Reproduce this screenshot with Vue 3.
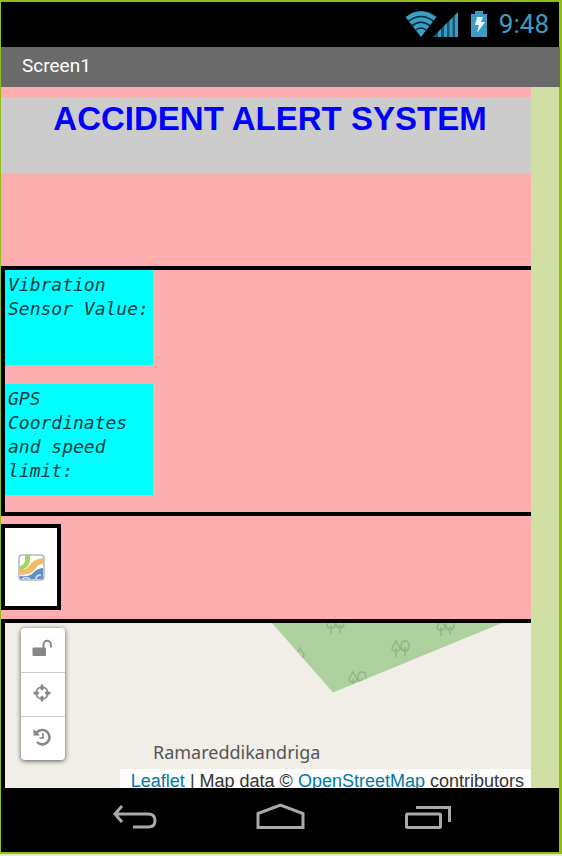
<script setup>
const conifer = 'M5 1L1 8q0 3 4 3t4-3zM5 8v9'
const broadleaf = 'M14 1q-4 0-4 5t4 5 4-5-4-5zM14 7v9M11.500 9l2.500 3 2.500-3'
const trees = [
  { x: 326, y: -6, shape: conifer + broadleaf },
  { x: 436, y: -4, shape: conifer + broadleaf },
  { x: 391, y: 17, shape: conifer + broadleaf },
  { x: 348, y: 48, shape: conifer + broadleaf },
  { x: 295, y: 24, shape: conifer },
]
const labels = [
  { text: 'Vibration Sensor Value:', size: 'short' },
  { text: 'GPS Coordinates and speed limit:', size: 'tall' },
]
</script>

<template>
  <div class="device">
    <header class="status">
      <svg class="signals" width="84" height="30" viewBox="0 0 84 30" aria-hidden="true">
        <path d="M1.500 8Q17 -4 32.500 8L17 28Z" fill="#3c9cc3" />
        <g fill="none" stroke="#0b2a36" stroke-width="1.600">
          <path d="M4 12.500Q17 2.500 30 12.500" />
          <path d="M7.500 17Q17 9.500 26.500 17" />
          <path d="M11 21.500Q17 16.500 23 21.500" />
        </g>
        <path d="M29 28L54 3V28Z" fill="#1c5870" />
        <path d="M34 28v-5l3-3v8zM40 28V17l3-3v14zM45.500 28V11.500l3-3V28zM51 28V6l3-3v25z" fill="#3c9cc3" />
        <path d="M67 5h4V2h8v3h4v23H67z" fill="#3c9cc3" />
        <path d="M73 8h6l-2 5h4l-8 11 2-8h-4z" fill="#e9f7fb" />
      </svg>
      <time class="clock">9:48</time>
    </header>
    <div class="titlebar">Screen1</div>

    <main class="body">
      <div class="screen">
        <h1 class="heading">ACCIDENT ALERT SYSTEM</h1>
        <section class="readings">
          <p v-for="l in labels" :key="l.text" :class="['label', l.size]">{{ l.text }}</p>
        </section>
        <button class="map-icon" type="button" aria-label="Map">
          <svg width="28" height="28" viewBox="0 0 28 28" aria-hidden="true">
            <rect x="2" y="2" width="25" height="25" rx="3" fill="#fff" />
            <path d="M8 2h5v5q0 6-6 9l-4 2v-5q5-2 5-6z" fill="#a2d45e" />
            <path d="M26 5v6q-5 0-7 4-3 5-8 6l-8 1v-5q6 0 9-4 4-7 14-8z" fill="#f4bd65" />
            <path d="M26 15v11H3v-3q8 1 12-2 5-6 11-6z" fill="#628fcb" />
            <path d="M5 26q4-3 8 0M19 26q0-4 5-4" fill="none" stroke="#dce8f6" stroke-width="1.500" />
            <rect x="2" y="2" width="25" height="25" rx="3" fill="none" stroke="#b4b7c0" stroke-width="1.500" />
          </svg>
        </button>
        <section class="map">
          <svg class="terrain" width="531" height="170" viewBox="5 0 531 170" aria-hidden="true">
            <defs>
              <clipPath id="wood"><path d="M272 0H502L333 69.500Z" /></clipPath>
            </defs>
            <path d="M274 0V170" stroke="#eceae4" />
            <path d="M272 0H502L333 69.500Z" fill="#add19e" />
            <g clip-path="url(#wood)" fill="none" stroke="#92b585" stroke-width="1.500">
              <path
                v-for="(t, i) in trees"
                :key="i"
                :transform="`translate(${t.x} ${t.y})`"
                :d="t.shape"
              />
            </g>
          </svg>
          <div class="tools">
            <button type="button" aria-label="Unlock">
              <svg width="20" height="20" viewBox="0 0 20 20" aria-hidden="true">
                <rect x="0.500" y="8.500" width="13.500" height="8.500" rx="1" fill="#868686" />
                <path d="M11.500 9V5.500a3.700 3.700 0 0 1 7.400 0v3" fill="none" stroke="#868686" stroke-width="2" />
              </svg>
            </button>
            <button type="button" aria-label="Center">
              <svg width="20" height="20" viewBox="0 0 20 20" aria-hidden="true">
                <circle cx="10" cy="10" r="6" fill="none" stroke="#868686" stroke-width="1.600" />
                <path d="M8.800 1.500h2.400V5l1 .5L10 7.500 7.800 5.500l1-.5zM8.800 18.500h2.400V15l1-.5L10 12.500l-2.200 2 1 .5zM1.500 8.800v2.400H5l.5 1L7.500 10l-2-2.200-.5 1zM18.500 8.800v2.400H15l-.5 1-2-2.200 2-2.200.5 1z" fill="#868686" />
              </svg>
            </button>
            <button type="button" aria-label="Reset">
              <svg width="20" height="20" viewBox="0 0 20 20" aria-hidden="true">
                <path d="M4.500 6A7.200 7.200 0 1 1 5 15" fill="none" stroke="#868686" stroke-width="2.600" />
                <path d="M1.500 2v6.500H8z" fill="#868686" />
                <path d="M11 6v5H7.500" fill="none" stroke="#868686" stroke-width="1.600" />
              </svg>
            </button>
          </div>
          <span class="place">Ramareddikandriga</span>
          <div class="attribution">
            <a href="#leaflet">Leaflet</a> | Map data © <a href="#osm">OpenStreetMap</a> contributors
          </div>
        </section>
      </div>
    </main>

    <nav class="navbar">
      <button type="button" aria-label="Back">
        <svg width="52" height="32" viewBox="0 0 52 32" aria-hidden="true">
          <path d="M15 4L8 12l7 8M8 12H41q7 0 7 6.500T41 25H26" />
        </svg>
      </button>
      <button type="button" aria-label="Home">
        <svg width="52" height="32" viewBox="0 0 52 32" aria-hidden="true">
          <path d="M4 11.500L26.500 3l22.500 8.500V25.500H4z" />
        </svg>
      </button>
      <button type="button" aria-label="Recent apps">
        <svg width="52" height="32" viewBox="0 0 52 32" aria-hidden="true">
          <rect x="5.500" y="12" width="34" height="13.500" rx="1" />
          <path d="M15 5.500H48.500V20" />
        </svg>
      </button>
    </nav>
  </div>
</template>

<style>
body {
  margin: 0;
  background: #e3f0b4;
}
</style>

<style scoped>
.device {
  box-sizing: border-box;
  display: flex;
  flex-direction: column;
  height: calc(100vh - 2px);
  border: 2px solid #92bd1b;
  border-left: 1px solid #92bd1b;
  border-right: 3px solid #8fbe0c;
  background: #d1dfa5;
  font-family: "Liberation Sans", Arial, sans-serif;
}
button {
  display: flex;
  align-items: center;
  justify-content: center;
  padding: 0;
  border: 0;
  background: none;
}
.status {
  display: flex;
  flex: none;
  align-items: center;
  justify-content: flex-end;
  gap: 11px;
  padding: 0 10px 2px 0;
  height: 43px;
  background: #000;
}
.clock {
  color: #3c9cc3;
  font: 26px/30px Roboto, sans-serif;
}
.titlebar {
  flex: none;
  margin-right: -1px;
  padding: 0 21px 2px;
  background: #6a6a6a;
  color: #fff;
  font: 19px/38px Roboto, sans-serif;
}
.body {
  flex: 1;
  min-height: 0;
  overflow: hidden;
}
.screen {
  margin-right: 28px;
  padding-top: 10px;
  background: #ffaeb0;
}
.heading {
  margin: 0 0 93px;
  padding: 2px 0 34px 8px;
  background: #ccc;
  color: #00f;
  font-size: 33px;
  line-height: 40px;
  text-align: center;
}
.readings {
  display: flex;
  flex-direction: column;
  align-items: flex-start;
  gap: 19px;
  padding-bottom: 17px;
  border: 4px solid #000;
  border-right: 0;
}
.label {
  box-sizing: border-box;
  width: 148px;
  margin: 0;
  padding: 3px;
  background: #0ff;
  color: #043c3c;
  font: italic 18px/24px "DejaVu Sans Mono", monospace;
}
.short {
  min-height: 95px;
}
.tall {
  min-height: 111px;
}
.map-icon {
  margin: 8px 0 9px;
  padding: 25px 12px;
  border: 4px solid #000;
  background: #fff;
}
.map {
  position: relative;
  height: 170px;
  border: 4px solid #000;
  border-width: 4px 0 0 4px;
  background: #f1eee8;
  overflow: hidden;
}
.terrain {
  position: absolute;
  top: 0;
  left: 0;
}
.tools {
  position: absolute;
  top: 5px;
  left: 16px;
  border-radius: 4px;
  background: #fff;
  box-shadow: 0 1px 5px rgba(0, 0, 0, 0.65);
}
.tools button {
  box-sizing: border-box;
  width: 44px;
  height: 44px;
  padding: 0 2px 3px 0;
}
.tools button + button {
  border-top: 1px solid #ccc;
}
.place {
  position: absolute;
  top: 117px;
  left: 148px;
  color: #555;
  font: 18px/24px "Noto Sans", sans-serif;
}
.attribution {
  position: absolute;
  right: 0;
  bottom: 0;
  padding: 0 7px 0 11px;
  background: rgba(255, 255, 255, 0.8);
  color: #333;
  font-size: 18px;
  line-height: 24px;
  white-space: nowrap;
}
.attribution a {
  color: #0078a8;
  text-decoration: none;
}
.navbar {
  display: flex;
  flex: none;
  justify-content: center;
  gap: 95px;
  height: 50px;
  padding-top: 14px;
  background: #000;
}
.navbar svg {
  fill: none;
  stroke: #a9a9a9;
  stroke-width: 3;
}
.navbar button {
  height: 32px;
}
</style>
